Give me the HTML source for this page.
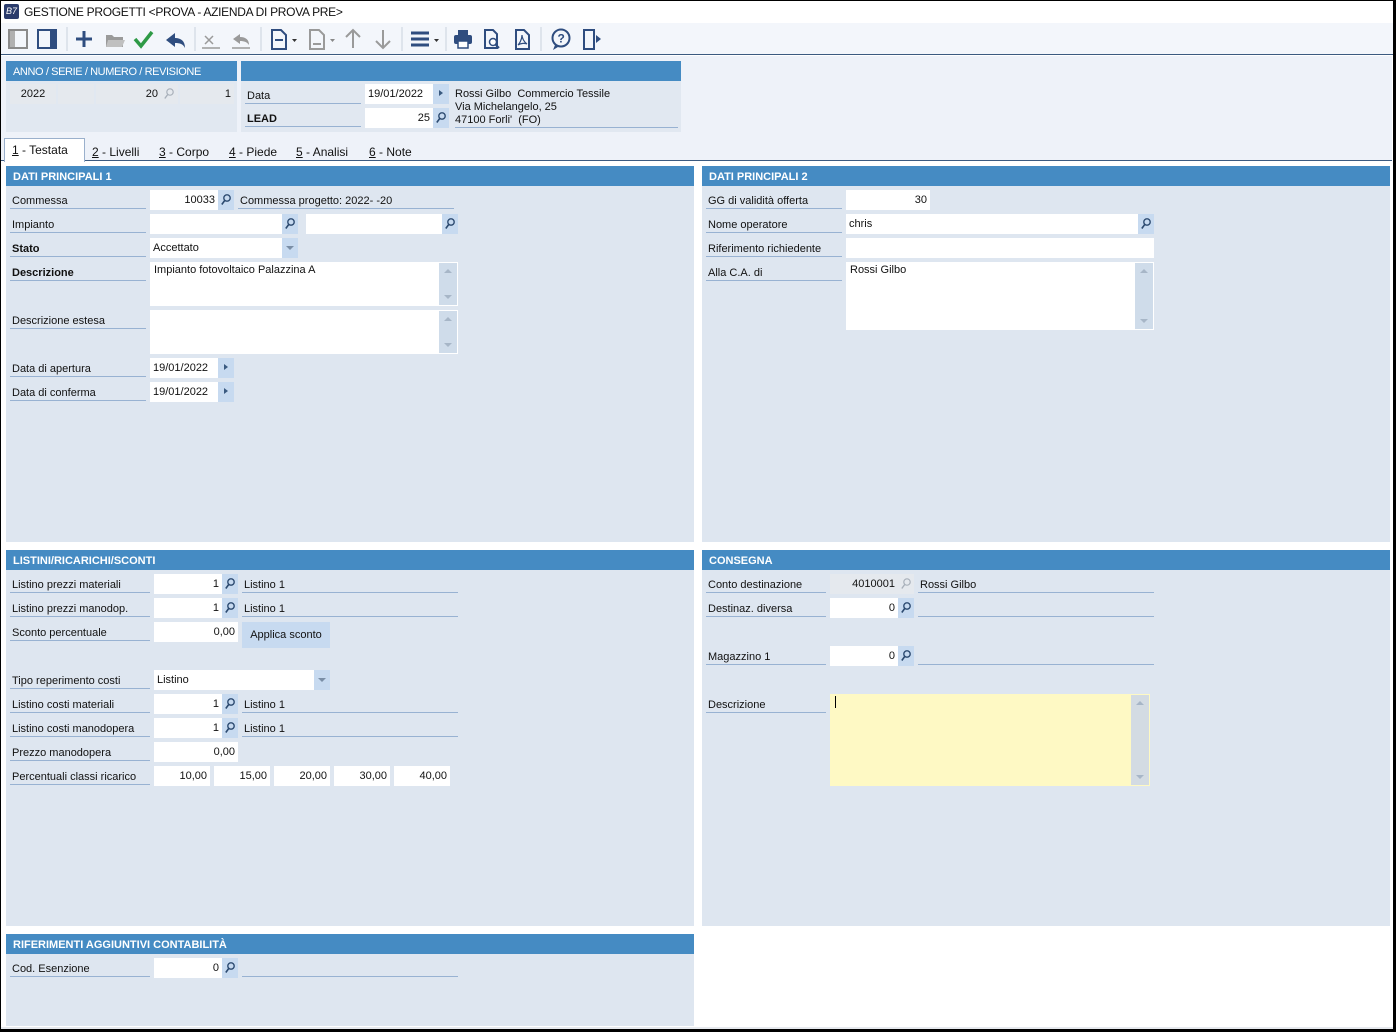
<!DOCTYPE html>
<html><head><meta charset="utf-8"><style>
*{margin:0;padding:0;box-sizing:border-box}
body{width:1396px;height:1032px;position:relative;overflow:hidden;background:#fff;font-family:"Liberation Sans",sans-serif;font-size:11px;color:#111}
div,span{position:absolute}
.frame{left:0;top:0;width:1396px;height:1032px;border:1px solid #000;border-right:3px solid #000;border-bottom:3px solid #000}
.p{background:#dee6f0}
.h{background:#458bc3;color:#fff;font-weight:bold;font-size:11px;height:20px;line-height:22px;padding-left:7px}
.l{height:18px;line-height:21px;border-bottom:1px solid #98b2d2;padding-left:2px;white-space:nowrap}
.i{background:#fff;height:20px;line-height:21px;padding:0 3px;white-space:nowrap}
.r{text-align:right}
.g{background:#e5e9ee}
.s{background:#c7daf0;width:16px;height:20px}
.s svg{position:absolute;left:3px;top:4px}
.dd{background:#c7daf0;width:16px;height:20px}
.dd:after{content:"";position:absolute;left:4px;top:8px;border-left:4px solid transparent;border-right:4px solid transparent;border-top:4px solid #7a8ea6}
.ar{background:#c7daf0;width:16px;height:20px}
.ar:after{content:"";position:absolute;left:6px;top:6px;border-top:3.5px solid transparent;border-bottom:3.5px solid transparent;border-left:4px solid #3a5a80}
.sb{background:#cfdcea;width:18px}
.sb:before{content:"";position:absolute;left:5px;top:6px;border-left:4px solid transparent;border-right:4px solid transparent;border-bottom:4px solid #a7b6c7}
.sb:after{content:"";position:absolute;left:5px;bottom:6px;border-left:4px solid transparent;border-right:4px solid transparent;border-top:4px solid #a7b6c7}
.u{height:18px;line-height:21px;border-bottom:1px solid #98b2d2;padding-left:2px;white-space:nowrap}
.tb svg{position:absolute}
</style></head><body>
<svg width="0" height="0" style="position:absolute"><defs><symbol id="mg" viewBox="0 0 10 12"><circle cx="6" cy="4" r="3.2" fill="none" stroke="#2c4a70" stroke-width="1.4"/><line x1="3.7" y1="6.5" x2="0.8" y2="10.5" stroke="#2c4a70" stroke-width="1.6"/></symbol><symbol id="mgg" viewBox="0 0 10 12"><circle cx="6" cy="4" r="3.2" fill="none" stroke="#a8b0ba" stroke-width="1.2"/><line x1="3.7" y1="6.5" x2="0.8" y2="10.5" stroke="#a8b0ba" stroke-width="1.4"/></symbol></defs></svg>

<div style="left:0;top:0;width:1396px;height:23px;background:#fff"></div>
<div style="left:4px;top:4px;width:15px;height:15px;background:#2b3c6c;border-radius:2px;color:#fff;font-size:9px;line-height:15px;text-align:center;font-style:italic">B7</div>
<div style="left:24px;top:5px;font-size:12px;letter-spacing:-0.3px">GESTIONE PROGETTI &lt;PROVA - AZIENDA DI PROVA PRE&gt;</div>
<div style="left:1px;top:23px;width:1392px;height:32px;background:#f3f6fb;border-bottom:1px solid #3b5a80"></div>
<div class="tb" style="left:0;top:23px;width:640px;height:32px">
<svg width="640" height="32" style="left:0;top:0">
<rect x="9" y="7" width="18" height="18" fill="none" stroke="#8a8a8a" stroke-width="2"/><rect x="10" y="8" width="5" height="16" fill="#b0b0b0"/>
<rect x="38" y="7" width="18" height="18" fill="none" stroke="#2f4d7f" stroke-width="2"/><rect x="50" y="8" width="5" height="16" fill="#2f4d7f"/>
<line x1="67" y1="4" x2="67" y2="28" stroke="#c8d2de"/>
<path d="M84 8v16M76 16h16" stroke="#2f4d7f" stroke-width="3"/>
<path d="M106 12h6l2 2h9v10h-17z" fill="#9a9a9a"/><path d="M108 17h17l-3 7h-16z" fill="#c0c0c0"/>
<path d="M135 16l6 7 11-14" fill="none" stroke="#2e9a46" stroke-width="3.5"/>
<path d="M175 10l-9 7 9 7v-4c5 0 8 1 10 5 0-7-4-10-10-10z" fill="#2f4d7f"/>
<line x1="195" y1="4" x2="195" y2="28" stroke="#c8d2de"/>
<path d="M205 13l8 8M213 13l-8 8" stroke="#9a9a9a" stroke-width="1.5"/><line x1="202" y1="25" x2="220" y2="25" stroke="#9a9a9a" stroke-width="1.5"/>
<path d="M240 11l-7 5 7 5v-3c4 0 7 1 9 4 0-5-3-8-9-8z" fill="#9a9a9a"/><line x1="232" y1="25" x2="250" y2="25" stroke="#9a9a9a" stroke-width="1.5"/>
<line x1="261" y1="4" x2="261" y2="28" stroke="#c8d2de"/>
<path d="M272 7h9l5 5v14h-14z" fill="none" stroke="#2f4d7f" stroke-width="2"/><line x1="275" y1="17" x2="283" y2="17" stroke="#2f4d7f" stroke-width="2"/><path d="M292 16h5l-2.5 3z" fill="#333"/>
<path d="M310 7h9l5 5v14h-14z" fill="none" stroke="#9a9a9a" stroke-width="2"/><line x1="313" y1="21" x2="321" y2="21" stroke="#9a9a9a" stroke-width="2"/><path d="M330 16h5l-2.5 3z" fill="#888"/>
<path d="M353 25V8M346 14l7-7 7 7" fill="none" stroke="#9a9a9a" stroke-width="2"/>
<path d="M383 7v17M376 18l7 7 7-7" fill="none" stroke="#9a9a9a" stroke-width="2"/>
<line x1="402" y1="4" x2="402" y2="28" stroke="#c8d2de"/>
<path d="M411 10h18M411 16h18M411 22h18" stroke="#2f4d7f" stroke-width="3"/><path d="M434 16h5l-2.5 3z" fill="#333"/>
<line x1="446" y1="4" x2="446" y2="28" stroke="#c8d2de"/>
<rect x="458" y="7" width="10" height="5" fill="#2f4d7f"/><rect x="454" y="12" width="18" height="9" rx="2" fill="#2f4d7f"/><rect x="458" y="18" width="10" height="7" fill="#fff" stroke="#2f4d7f" stroke-width="1.5"/>
<path d="M485 7h8l4 4v14h-12z" fill="none" stroke="#2f4d7f" stroke-width="2"/><circle cx="493" cy="19" r="3.5" fill="#fff" stroke="#2f4d7f" stroke-width="1.5"/><line x1="495.5" y1="21.5" x2="499" y2="25" stroke="#2f4d7f" stroke-width="2"/>
<path d="M516 7h8l5 5v14h-13z" fill="none" stroke="#2f4d7f" stroke-width="2"/><path d="M522 12c0 5-3 9-4 10 3-2 7-2 9-1-3-2-5-6-5-9z" fill="none" stroke="#2f4d7f" stroke-width="1.2"/>
<line x1="541" y1="4" x2="541" y2="28" stroke="#c8d2de"/>
<circle cx="561" cy="15" r="8.5" fill="none" stroke="#2f4d7f" stroke-width="2"/><path d="M555 22l-2 5 5-3" fill="#2f4d7f"/><text x="557.5" y="19.5" font-size="12" font-weight="bold" fill="#2f4d7f" font-family="Liberation Sans">?</text>
<path d="M584 7h10v19h-10z" fill="none" stroke="#2f4d7f" stroke-width="2"/><path d="M588 16h8v-4l5 4-5 4v-4" fill="#2f4d7f"/>
</svg></div>

<div style="left:1px;top:56px;width:1391px;height:105px;background:#eef2f9;border-bottom:1px solid #3b5a80"></div>
<div class="p" style="left:6px;top:61px;width:231px;height:71px;background:#e1e8f1"></div>
<div class="h" style="left:6px;top:61px;width:231px;font-weight:normal;letter-spacing:-0.4px">ANNO / SERIE / NUMERO / REVISIONE</div>
<div class="i g" style="left:10px;top:84px;width:46px;text-align:center">2022</div>
<div class="i g" style="left:58px;top:84px;width:36px"></div>
<div class="i g r" style="left:96px;top:84px;width:82px;padding-right:20px">20</div>
<svg width="10" height="12" style="position:absolute;left:164px;top:88px"><use href="#mgg"/></svg>
<div class="i g r" style="left:180px;top:84px;width:54px">1</div>
<div class="p" style="left:241px;top:61px;width:440px;height:71px;background:#e1e8f1"></div>
<div class="h" style="left:241px;top:61px;width:440px"></div>
<div class="l" style="left:245px;top:86px;width:116px">Data</div>
<div class="i" style="left:365px;top:84px;width:68px">19/01/2022</div><div class="ar" style="left:433px;top:84px"></div>
<div class="l" style="left:245px;top:109px;width:116px;font-weight:bold">LEAD</div>
<div class="i r" style="left:365px;top:108px;width:68px">25</div><div class="s" style="left:433px;top:108px"><svg width="10" height="12"><use href="#mg"/></svg></div>
<div style="left:455px;top:88px;line-height:13px;width:223px;height:40px;border-bottom:1px solid #98b2d2">Rossi Gilbo&nbsp; Commercio Tessile<br>Via Michelangelo, 25<br>47100 Forli'&nbsp; (FO)</div>
<div style="left:4px;top:138px;width:81px;height:24px;background:#fff;border:1px solid #9ab0cc;border-bottom:none"></div>
<div style="left:12px;top:143px;font-size:12px"><u>1</u> - Testata</div>
<div style="left:92px;top:145px;font-size:12px"><u>2</u> - Livelli</div>
<div style="left:159px;top:145px;font-size:12px"><u>3</u> - Corpo</div>
<div style="left:229px;top:145px;font-size:12px"><u>4</u> - Piede</div>
<div style="left:296px;top:145px;font-size:12px"><u>5</u> - Analisi</div>
<div style="left:369px;top:145px;font-size:12px"><u>6</u> - Note</div>

<div class="p" style="left:6px;top:166px;width:688px;height:376px"></div>
<div class="h" style="left:6px;top:166px;width:688px">DATI PRINCIPALI 1</div>
<div class="l" style="left:10px;top:191px;width:136px">Commessa</div>
<div class="i r" style="left:150px;top:190px;width:68px">10033</div><div class="s" style="left:218px;top:190px"><svg width="10" height="12"><use href="#mg"/></svg></div>
<div class="u" style="left:238px;top:191px;width:216px">Commessa progetto: 2022- -20</div>
<div class="l" style="left:10px;top:215px;width:136px">Impianto</div>
<div class="i" style="left:150px;top:214px;width:132px"></div><div class="s" style="left:282px;top:214px"><svg width="10" height="12"><use href="#mg"/></svg></div>
<div class="i" style="left:306px;top:214px;width:136px"></div><div class="s" style="left:442px;top:214px"><svg width="10" height="12"><use href="#mg"/></svg></div>
<div class="l" style="left:10px;top:239px;width:136px;font-weight:bold">Stato</div>
<div class="i" style="left:150px;top:238px;width:132px">Accettato</div><div class="dd" style="left:282px;top:238px"></div>
<div class="l" style="left:10px;top:263px;width:136px;font-weight:bold">Descrizione</div>
<div class="i" style="left:150px;top:262px;width:308px;height:44px;padding-left:4px;line-height:17px">Impianto fotovoltaico Palazzina A</div><div class="sb" style="left:439px;top:263px;height:42px"></div>
<div class="l" style="left:10px;top:311px;width:136px">Descrizione estesa</div>
<div class="i" style="left:150px;top:310px;width:308px;height:44px"></div><div class="sb" style="left:439px;top:311px;height:42px"></div>
<div class="l" style="left:10px;top:359px;width:136px">Data di apertura</div>
<div class="i" style="left:150px;top:358px;width:68px">19/01/2022</div><div class="ar" style="left:218px;top:358px"></div>
<div class="l" style="left:10px;top:383px;width:136px">Data di conferma</div>
<div class="i" style="left:150px;top:382px;width:68px">19/01/2022</div><div class="ar" style="left:218px;top:382px"></div>

<div class="p" style="left:702px;top:166px;width:688px;height:376px"></div>
<div class="h" style="left:702px;top:166px;width:688px">DATI PRINCIPALI 2</div>
<div class="l" style="left:706px;top:191px;width:136px">GG di validità offerta</div>
<div class="i r" style="left:846px;top:190px;width:84px">30</div>
<div class="l" style="left:706px;top:215px;width:136px">Nome operatore</div>
<div class="i" style="left:846px;top:214px;width:292px">chris</div><div class="s" style="left:1138px;top:214px"><svg width="10" height="12"><use href="#mg"/></svg></div>
<div class="l" style="left:706px;top:239px;width:136px">Riferimento richiedente</div>
<div class="i" style="left:846px;top:238px;width:308px"></div>
<div class="l" style="left:706px;top:263px;width:136px">Alla C.A. di</div>
<div class="i" style="left:846px;top:262px;width:308px;height:68px;padding-left:4px;line-height:17px">Rossi Gilbo</div><div class="sb" style="left:1135px;top:263px;height:66px"></div>

<div class="p" style="left:6px;top:550px;width:688px;height:376px"></div>
<div class="h" style="left:6px;top:550px;width:688px">LISTINI/RICARICHI/SCONTI</div>
<div class="l" style="left:10px;top:575px;width:140px">Listino prezzi materiali</div>
<div class="i r" style="left:154px;top:574px;width:68px">1</div><div class="s" style="left:222px;top:574px"><svg width="10" height="12"><use href="#mg"/></svg></div>
<div class="u" style="left:242px;top:575px;width:216px">Listino 1</div>
<div class="l" style="left:10px;top:599px;width:140px">Listino prezzi manodop.</div>
<div class="i r" style="left:154px;top:598px;width:68px">1</div><div class="s" style="left:222px;top:598px"><svg width="10" height="12"><use href="#mg"/></svg></div>
<div class="u" style="left:242px;top:599px;width:216px">Listino 1</div>
<div class="l" style="left:10px;top:623px;width:140px">Sconto percentuale</div>
<div class="i r" style="left:154px;top:622px;width:84px">0,00</div>
<div style="left:242px;top:622px;width:88px;height:26px;background:#c7daf0;line-height:27px;text-align:center">Applica sconto</div>
<div class="l" style="left:10px;top:671px;width:140px">Tipo reperimento costi</div>
<div class="i" style="left:154px;top:670px;width:160px">Listino</div><div class="dd" style="left:314px;top:670px"></div>
<div class="l" style="left:10px;top:695px;width:140px">Listino costi materiali</div>
<div class="i r" style="left:154px;top:694px;width:68px">1</div><div class="s" style="left:222px;top:694px"><svg width="10" height="12"><use href="#mg"/></svg></div>
<div class="u" style="left:242px;top:695px;width:216px">Listino 1</div>
<div class="l" style="left:10px;top:719px;width:140px">Listino costi manodopera</div>
<div class="i r" style="left:154px;top:718px;width:68px">1</div><div class="s" style="left:222px;top:718px"><svg width="10" height="12"><use href="#mg"/></svg></div>
<div class="u" style="left:242px;top:719px;width:216px">Listino 1</div>
<div class="l" style="left:10px;top:743px;width:140px">Prezzo manodopera</div>
<div class="i r" style="left:154px;top:742px;width:84px">0,00</div>
<div class="l" style="left:10px;top:767px;width:140px">Percentuali classi ricarico</div>
<div class="i r" style="left:154px;top:766px;width:56px">10,00</div>
<div class="i r" style="left:214px;top:766px;width:56px">15,00</div>
<div class="i r" style="left:274px;top:766px;width:56px">20,00</div>
<div class="i r" style="left:334px;top:766px;width:56px">30,00</div>
<div class="i r" style="left:394px;top:766px;width:56px">40,00</div>

<div class="p" style="left:702px;top:550px;width:688px;height:376px"></div>
<div class="h" style="left:702px;top:550px;width:688px">CONSEGNA</div>
<div class="l" style="left:706px;top:575px;width:120px">Conto destinazione</div>
<div class="i r g" style="left:830px;top:574px;width:68px">4010001</div><div class="g" style="left:898px;top:574px;width:16px;height:20px"><svg width="10" height="12" style="position:absolute;left:3px;top:4px"><use href="#mgg"/></svg></div>
<div class="u" style="left:918px;top:575px;width:236px">Rossi Gilbo</div>
<div class="l" style="left:706px;top:599px;width:120px">Destinaz. diversa</div>
<div class="i r" style="left:830px;top:598px;width:68px">0</div><div class="s" style="left:898px;top:598px"><svg width="10" height="12"><use href="#mg"/></svg></div>
<div class="u" style="left:918px;top:599px;width:236px"></div>
<div class="l" style="left:706px;top:647px;width:120px">Magazzino 1</div>
<div class="i r" style="left:830px;top:646px;width:68px">0</div><div class="s" style="left:898px;top:646px"><svg width="10" height="12"><use href="#mg"/></svg></div>
<div class="u" style="left:918px;top:647px;width:236px"></div>
<div class="l" style="left:706px;top:695px;width:120px">Descrizione</div>
<div style="left:830px;top:694px;width:320px;height:92px;background:#fef9c4"></div>
<div style="left:835px;top:696px;width:1px;height:12px;background:#000"></div>
<div class="sb" style="left:1131px;top:695px;height:90px;background:#d3dbe3"></div>

<div class="p" style="left:6px;top:934px;width:688px;height:92px"></div>
<div class="h" style="left:6px;top:934px;width:688px">RIFERIMENTI AGGIUNTIVI CONTABILITÀ</div>
<div class="l" style="left:10px;top:959px;width:140px">Cod. Esenzione</div>
<div class="i r" style="left:154px;top:958px;width:68px">0</div><div class="s" style="left:222px;top:958px"><svg width="10" height="12"><use href="#mg"/></svg></div>
<div class="u" style="left:242px;top:959px;width:216px"></div>
<div style="left:1px;top:1027px;width:1392px;height:2px;background:#e6e9ee"></div>
<div class="frame"></div>
</body></html>
